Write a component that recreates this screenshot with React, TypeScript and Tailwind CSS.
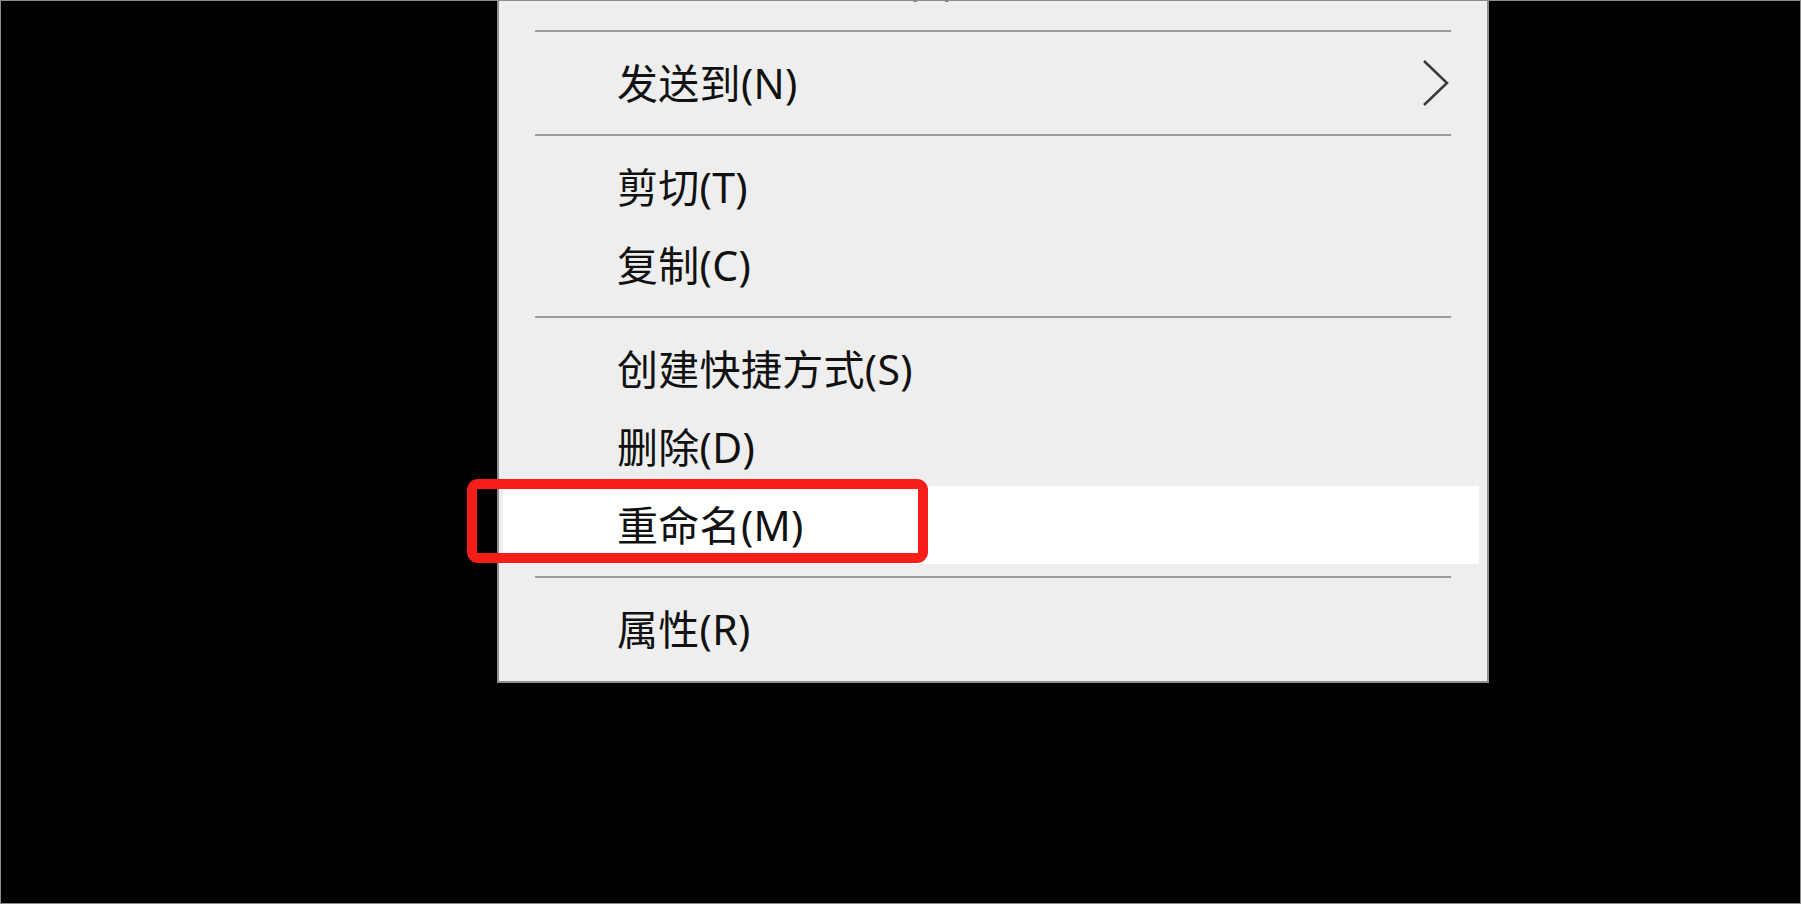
import React from 'react'

type Item = { label: string; sub?: boolean; active?: boolean } | 'sep'

const items: Item[] = [
  { label: '还原以前的版本(V)' },
  'sep',
  { label: '发送到(N)', sub: true },
  'sep',
  { label: '剪切(T)' },
  { label: '复制(C)' },
  'sep',
  { label: '创建快捷方式(S)' },
  { label: '删除(D)' },
  { label: '重命名(M)', active: true },
  'sep',
  { label: '属性(R)' },
]

const Chevron = () => (
  <svg width="28" height="48" viewBox="0 0 28 48" fill="none">
    <polyline points="2,2 25,24 2,46" stroke="#3a3a3a" strokeWidth="2.5" strokeLinejoin="miter" />
  </svg>
)

const App = () => {
  return (
    <div
      className="h-[904px] w-full overflow-hidden border border-[#8c8c8c] bg-black"
      style={{ fontFamily: '"Noto Sans", "Noto Sans CJK SC", sans-serif' }}
    >
      <div className="ml-[496px] mt-[-61px] w-[992px] border-x-2 border-b-2 border-[#8f8f8f] bg-[#eeeeee] pb-[13px]">
        {items.map((it, i) =>
          it === 'sep' ? (
            <div key={i} className="flex h-[26px] items-center px-[36px]">
              <div className="h-[2px] w-full bg-[#9c9c9c]" />
            </div>
          ) : (
            <div key={i} className="relative ml-[4px] mr-[8px]">
              <div
                className={`flex h-[78px] items-center justify-between pl-[114px] pr-[29px] text-[41px] leading-none tracking-[0.3px] text-[#111111] ${
                  it.active ? 'bg-white' : ''
                }`}
              >
                <span>{it.label}</span>
                {it.sub && <Chevron />}
              </div>
              {it.active && (
                <div className="pointer-events-none absolute left-[-36px] top-[-7px] h-[84px] w-[461px] rounded-[11px] border-[10px] border-[#f71e1a]" />
              )}
            </div>
          )
        )}
      </div>
    </div>
  )
}

export default App
